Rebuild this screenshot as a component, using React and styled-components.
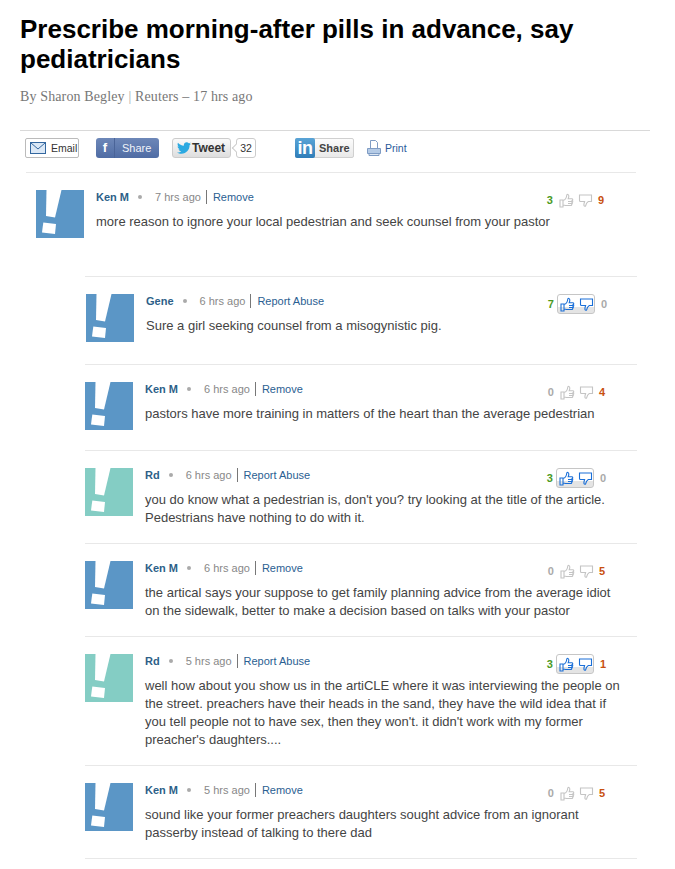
import React from 'react';
import styled, { createGlobalStyle, css } from 'styled-components';
import { FaTwitter } from 'react-icons/fa';

const GlobalStyle = createGlobalStyle`
    body {
        margin: 0;
        background: #fff;
        font-family: "Liberation Sans", Arial, sans-serif;
    }
`;

const Page = styled.div`
    width: 675px;
    height: 869px;
    overflow: hidden;
    box-sizing: border-box;
    padding-top: 14px;
`;

//#region header
const Title = styled.h1`
    margin: 0 0 0 20px;
    width: 600px;
    font-size: 26px;
    line-height: 30px;
    font-weight: bold;
    color: #000;
`;

const Byline = styled.div`
    margin: 15px 0 0 20px;
    font-family: "Liberation Serif", serif;
    font-size: 14px;
    letter-spacing: 0.13px;
    line-height: 16px;
    color: #777;
    span { color: #aaa; }
`;

const Toolbar = styled.div`
    margin: 25px 25px 0 20px;
    border-top: 1px solid #d9d9d9;
    padding: 7px 0 0 5px;
    height: 42px;
    box-sizing: border-box;
    display: flex;
    align-items: flex-start;
`;

const EmailButton = styled.div`
    width: 54px;
    height: 20px;
    box-sizing: border-box;
    border: 1px solid #bbb;
    border-radius: 2px;
    display: flex;
    align-items: center;
    gap: 5px;
    padding-left: 4px;
    font-size: 10.5px;
    color: #333;
`;

const FacebookButton = styled.div`
    margin-left: 17px;
    width: 63px;
    height: 20px;
    box-sizing: border-box;
    border-radius: 3px;
    background: linear-gradient(#6d87b8, #4f6ca4);
    display: flex;
    align-items: center;
    color: #f0f3f9;
    font-size: 11px;
`;

const FacebookMark = styled.span`
    width: 18px;
    text-align: center;
    color: #fff;
    font-size: 13px;
    font-weight: bold;
    border-right: 1px solid #4a6498;
    line-height: 20px;
    margin-right: 7px;
`;

const TweetButton = styled.div`
    margin-left: 13px;
    width: 59px;
    height: 20px;
    box-sizing: border-box;
    border: 1px solid #ccc;
    border-radius: 3px;
    background: linear-gradient(#fafafa, #dedede);
    display: flex;
    align-items: center;
    gap: 1px;
    padding-left: 4px;
    font-size: 12px;
    font-weight: bold;
    color: #333;
`;

const TweetCount = styled.div`
    position: relative;
    margin-left: 5px;
    width: 20px;
    height: 20px;
    box-sizing: border-box;
    border: 1px solid #ccc;
    border-radius: 3px;
    font-size: 10.5px;
    line-height: 18px;
    text-align: center;
    color: #333;
    &::before {
        content: "";
        position: absolute;
        left: -4px;
        top: 6px;
        width: 5px;
        height: 5px;
        background: #fff;
        border-left: 1px solid #ccc;
        border-bottom: 1px solid #ccc;
        transform: rotate(45deg);
    }
`;

const LinkedinButton = styled.div`
    margin-left: 39px;
    width: 59px;
    height: 20px;
    box-sizing: border-box;
    border: 1px solid #d0d0d0;
    border-radius: 2px;
    background: linear-gradient(#fcfcfc, #e9e9e9);
    display: flex;
    align-items: center;
    font-size: 11px;
    font-weight: bold;
    color: #444;
`;

const LinkedinMark = styled.span`
    width: 20px;
    height: 20px;
    margin: -1px 4px -1px -1px;
    border-radius: 2px;
    background: linear-gradient(#5aa4d6, #2f7db8);
    color: #fff;
    font-size: 18px;
    line-height: 21px;
    text-align: center;
    letter-spacing: -0.5px;
`;

const PrintLink = styled.div`
    margin-left: 13px;
    display: flex;
    align-items: center;
    height: 20px;
    gap: 4px;
    font-size: 10.5px;
    color: #2a5a9a;
`;
//#endregion

//#region comments
const TopComments = styled.div`
    margin: 0 39px 0 26px;
    border-top: 1px solid #e8e8e8;
`;

const Replies = styled.div`
    margin: 0 38px 0 85px;
    border-top: 1px solid #e8e8e8;
`;

const CommentRow = styled.div`
    display: flex;
    align-items: flex-start;
    gap: 12px;
    padding: 17px 0 0 ${(p) => p.$indent || 0}px;
    height: ${(p) => p.$height}px;
    box-sizing: border-box;
    ${(p) => p.$divided && css`
        border-bottom: 1px solid #e8e8e8;
    `}
`;

const Avatar = styled.svg`
    flex: none;
    width: 48px;
    height: 48px;
    display: block;
`;

const CommentBody = styled.div`
    flex: 1;
    min-width: 0;
`;

const CommentHead = styled.div`
    display: flex;
    align-items: flex-start;
    justify-content: space-between;
    height: 22px;
`;

const Meta = styled.div`
    display: flex;
    align-items: center;
    height: 14px;
    font-size: 11px;
    color: #888;
`;

const Author = styled.span`
    font-weight: bold;
    color: #2d5f88;
`;

const Dot = styled.span`
    width: 4px;
    height: 4px;
    border-radius: 50%;
    background: #aaa;
    margin: 0 13px 0 9px;
`;

const MetaLink = styled.span`
    margin-left: 5px;
    padding-left: 6px;
    border-left: 1px solid #777;
    line-height: 14px;
    color: #2a6092;
    position: relative;
`;

const CommentText = styled.div`
    font-size: 13px;
    line-height: 18px;
    color: #444;
    margin-top: 1px;
    width: 480px;
`;

const Votes = styled.div`
    display: flex;
    align-items: center;
    height: 20px;
    margin-right: ${(p) => p.$right}px;
    font-size: 11px;
    font-weight: bold;
`;

const VoteUp = styled.span`
    color: ${(p) => p.$zero ? '#aaa' : '#4a9a1e'};
    margin-right: 3px;
`;

const VoteDown = styled.span`
    color: ${(p) => p.$zero ? '#aaa' : '#c8500f'};
    margin-left: ${(p) => p.$active ? 6 : 4}px;
`;

const VoteButtons = styled.div`
    display: flex;
    align-items: center;
    gap: 4px;
    width: 38px;
    height: 20px;
    box-sizing: border-box;
    padding-left: 3px;
    ${(p) => p.$active && css`
        border: 1px solid #c6c6c6;
        border-radius: 3px;
        padding-left: 2px;
        background: linear-gradient(#fff 65%, #e4e4e4 65%);
    `}
`;

const Thumb = styled.svg`
    width: 15px;
    height: 15px;
    fill: none;
    stroke: ${(p) => p.$active ? '#1a6fd8' : '#c4c4c4'};
    stroke-width: 1.1;
    display: block;
`;
//#endregion

const AvatarIcon = ({ teal }) => (
    <Avatar viewBox="0 0 48 48">
        <rect width="48" height="48" fill={teal ? '#84cdc4' : '#5b96c6'} />
        <polygon points="10.5,0 25.5,0 19,27.5 10,26" fill="#fff" />
        <polygon points="7.3,32.6 20,34 19,44 6,42.6" fill="#fff" />
    </Avatar>
);

const ThumbUp = ({ active }) => (
    <Thumb $active={active} viewBox="0 0 15 15">
        <path d="M1 7h3v7H1zM4 7.500c2-.5 3.500-2.500 3.800-5.500.1-1 2-.8 2 1 0 1-.3 2-.6 2.800h3.600c1.200 0 1.200 1.600.4 1.900.8.300.7 1.600-.1 1.800.5.500.3 1.500-.4 1.700.2.700-.2 1.300-1 1.300H7c-1 0-1.800-.5-3-.5" />
        <path d="M9 8.500h4M9 10.500h4M9 12.500h3" />
    </Thumb>
);

const ThumbDown = ({ active }) => (
    <Thumb $active={active} viewBox="0 0 15 15">
        <path d="M1.500 2h12v6.500h-3.200c-1.300.8-2.300 2.200-2.600 4.200-.1.900-1.700.8-1.800-.6 0-1.300.3-2.500.7-3.600H2.500c-.7 0-1-.4-1-1z" />
    </Thumb>
);

const comments = [
    { author: 'Gene', time: '6 hrs ago', link: 'Report Abuse', text: 'Sure a girl seeking counsel from a misogynistic pig.', up: 7, down: 0, active: true, indent: 1, height: 88, right: 30 },
    { author: 'Ken M', time: '6 hrs ago', link: 'Remove', text: 'pastors have more training in matters of the heart than the average pedestrian', up: 0, down: 4, height: 86, right: 32 },
    { author: 'Rd', time: '6 hrs ago', link: 'Report Abuse', text: "you do know what a pedestrian is, don't you? try looking at the title of the article. Pedestrians have nothing to do with it.", up: 3, down: 0, active: true, teal: true, height: 93, right: 31 },
    { author: 'Ken M', time: '6 hrs ago', link: 'Remove', text: 'the artical says your suppose to get family planning advice from the average idiot on the sidewalk, better to make a decision based on talks with your pastor', up: 0, down: 5, height: 93, right: 32 },
    { author: 'Rd', time: '5 hrs ago', link: 'Report Abuse', text: "well how about you show us in the artiCLE where it was interviewing the people on the street. preachers have their heads in the sand, they have the wild idea that if you tell people not to have sex, then they won't. it didn't work with my former preacher's daughters....", up: 3, down: 1, active: true, teal: true, height: 129, right: 31 },
    { author: 'Ken M', time: '5 hrs ago', link: 'Remove', text: 'sound like your former preachers daughters sought advice from an ignorant passerby instead of talking to there dad', up: 0, down: 5, height: 93, right: 32 },
];

const Comment = ({ item, divided }) => (
    <CommentRow $indent={item.indent} $height={item.height} $divided={divided}>
        <AvatarIcon teal={item.teal} />
        <CommentBody>
            <CommentHead>
                <Meta>
                    <Author>{item.author}</Author>
                    <Dot />
                    {item.time}
                    <MetaLink>{item.link}</MetaLink>
                </Meta>
                <Votes $right={item.right}>
                    <VoteUp $zero={item.up === 0}>{item.up}</VoteUp>
                    <VoteButtons $active={item.active}>
                        <ThumbUp active={item.active} />
                        <ThumbDown active={item.active} />
                    </VoteButtons>
                    <VoteDown $zero={item.down === 0} $active={item.active}>{item.down}</VoteDown>
                </Votes>
            </CommentHead>
            <CommentText>{item.text}</CommentText>
        </CommentBody>
    </CommentRow>
);

const App = () => (
    <Page>
        <GlobalStyle />
        <Title>Prescribe morning-after pills in advance, say pediatricians</Title>
        <Byline>By Sharon Begley <span>|</span> Reuters – 17 hrs ago</Byline>
        <Toolbar>
            <EmailButton>
                <svg width="16" height="12" viewBox="0 0 16 12">
                    <rect x="0.5" y="0.5" width="15" height="11" fill="#dbe8f6" stroke="#33679f" />
                    <path d="M1 1l7 6 7-6" fill="none" stroke="#33679f" />
                </svg>
                Email
            </EmailButton>
            <FacebookButton>
                <FacebookMark>f</FacebookMark>
                Share
            </FacebookButton>
            <TweetButton>
                <FaTwitter size={14} color="#2ba9e1" />
                Tweet
            </TweetButton>
            <TweetCount>32</TweetCount>
            <LinkedinButton>
                <LinkedinMark>in</LinkedinMark>
                Share
            </LinkedinButton>
            <PrintLink>
                <svg width="14" height="16" viewBox="0 0 14 16">
                    <path d="M3.500.5h5l2 2v6h-7z" fill="#fff" stroke="#7f9cc4" />
                    <path d="M.5 8.500h13v5H.5z" fill="#b5cbe6" stroke="#7f9cc4" />
                    <path d="M2 13.500h10v2H2z" fill="#dde7f3" stroke="#7f9cc4" />
                </svg>
                Print
            </PrintLink>
        </Toolbar>
        <TopComments>
            <CommentRow $indent={10} $height={103}>
                <AvatarIcon />
                <CommentBody>
                    <CommentHead>
                        <Meta>
                            <Author>Ken M</Author>
                            <Dot />
                            7 hrs ago
                            <MetaLink>Remove</MetaLink>
                        </Meta>
                        <Votes $right={32}>
                            <VoteUp>3</VoteUp>
                            <VoteButtons>
                                <ThumbUp />
                                <ThumbDown />
                            </VoteButtons>
                            <VoteDown>9</VoteDown>
                        </Votes>
                    </CommentHead>
                    <CommentText>more reason to ignore your local pedestrian and seek counsel from your pastor</CommentText>
                </CommentBody>
            </CommentRow>
        </TopComments>
        <Replies>
            {comments.map((item, i) => (
                <Comment key={i} item={item} divided />
            ))}
        </Replies>
    </Page>
);

export default App;
